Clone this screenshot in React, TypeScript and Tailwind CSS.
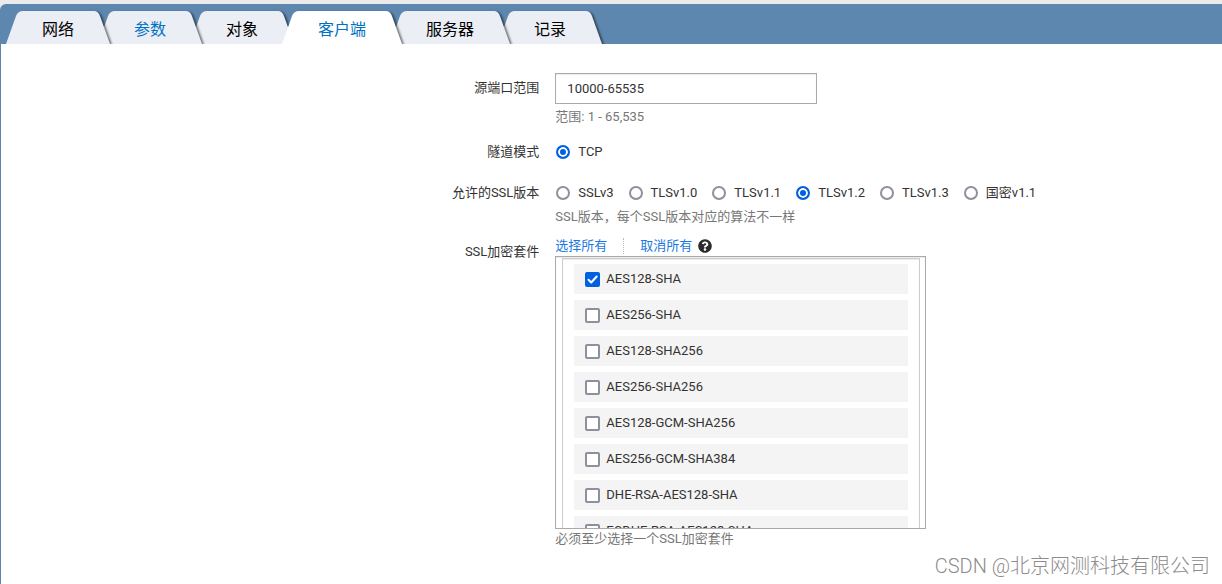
import { useState, type ReactNode } from 'react'
import { FaQuestionCircle } from 'react-icons/fa'

const tabs: Array<{ label: string; layer: string; visited?: boolean }> = [
  { label: '网络', layer: 'z-[6]' },
  { label: '参数', layer: 'z-[5]', visited: true },
  { label: '对象', layer: 'z-[4]' },
  { label: '客户端', layer: 'z-[3]', visited: true },
  { label: '服务器', layer: 'z-[2]' },
  { label: '记录', layer: 'z-[1]' },
]

const sslVersions = ['SSLv3', 'TLSv1.0', 'TLSv1.1', 'TLSv1.2', 'TLSv1.3', '国密v1.1']

const cipherSuites = [
  'AES128-SHA',
  'AES256-SHA',
  'AES128-SHA256',
  'AES256-SHA256',
  'AES128-GCM-SHA256',
  'AES256-GCM-SHA384',
  'DHE-RSA-AES128-SHA',
  'ECDHE-RSA-AES128-SHA',
]

function TabShape({ active }: { active: boolean }) {
  const fill = active ? 'fill-white' : 'fill-[#ebeef4]'

  return (
    <span className="absolute inset-0 -z-10 flex drop-shadow-[2px_1px_1px_rgba(0,0,0,0.55)]">
      <svg viewBox="0 0 24 33" className={`h-full w-6 ${fill}`} aria-hidden="true">
        <path d="M0 33 L10 5 Q12 0 17 0 H24 V33 Z" />
      </svg>
      <span className={`flex-1 ${active ? 'bg-white' : 'bg-[#ebeef4]'}`} />
      <svg viewBox="0 0 24 33" className={`h-full w-6 ${fill}`} aria-hidden="true">
        <path d="M0 0 H8 Q12 0 14 5 L24 33 H0 Z" />
      </svg>
    </span>
  )
}

function TabBar({ current, onSelect }: { current: string; onSelect: (label: string) => void }) {
  return (
    <nav className="flex overflow-hidden rounded-tl-md bg-[#5d87af] pt-[7px] pl-[18px]">
      {tabs.map((tab) => {
        const active = tab.label === current

        return (
          <button
            key={tab.label}
            type="button"
            onClick={() => onSelect(tab.label)}
            className={`relative isolate -ml-3 h-[33px] px-9 pt-1 text-base leading-7 whitespace-nowrap ${
              active ? 'z-10' : tab.layer
            } ${active || tab.visited ? 'text-[#0072c6]' : 'text-black'}`}
          >
            <TabShape active={active} />
            {tab.label}
          </button>
        )
      })}
    </nav>
  )
}

function Row({ label, htmlFor, className = '', children }: { label: string; htmlFor?: string; className?: string; children: ReactNode }) {
  return (
    <div className="flex">
      <label htmlFor={htmlFor} className={`w-[45.4%] shrink-0 pr-4 text-right leading-5 ${className}`}>
        {label}
      </label>
      <div className="min-w-0 flex-1">{children}</div>
    </div>
  )
}

function Radio({ name, label, checked, onChange }: { name: string; label: string; checked: boolean; onChange: () => void }) {
  return (
    <label className="flex items-center gap-2 leading-5 whitespace-nowrap">
      <input
        type="radio"
        name={name}
        checked={checked}
        onChange={onChange}
        className="size-[14px] appearance-none rounded-full border-2 border-[#8f8f9d] bg-white checked:border-[#0061e0] checked:bg-[#0061e0] checked:shadow-[inset_0_0_0_2px_white]"
      />
      {label}
    </label>
  )
}

function CipherItem({ label, checked, onChange }: { label: string; checked: boolean; onChange: () => void }) {
  return (
    <li className="bg-[#f4f4f4]">
      <label className="flex h-[30px] items-center gap-[6px] pl-[11px]">
        <span className="grid">
          <input
            type="checkbox"
            checked={checked}
            onChange={onChange}
            className="col-start-1 row-start-1 size-[15px] appearance-none rounded-xs border-2 border-[#8f8f9d] bg-white checked:border-[#0061e0] checked:bg-[#0061e0]"
          />
          {checked ? (
            <svg viewBox="0 0 15 15" className="pointer-events-none col-start-1 row-start-1 size-[15px]" aria-hidden="true">
              <path d="M3.5 7.8 L6.2 10.5 L11.7 4.5" fill="none" stroke="white" strokeWidth="2" strokeLinecap="round" strokeLinejoin="round" />
            </svg>
          ) : null}
        </span>
        {label}
      </label>
    </li>
  )
}

export default function App() {
  const [tab, setTab] = useState('客户端')
  const [ports, setPorts] = useState('10000-65535')
  const [version, setVersion] = useState('TLSv1.2')
  const [ciphers, setCiphers] = useState<string[]>(['AES128-SHA'])

  const toggleCipher = (name: string) =>
    setCiphers((list) => (list.includes(name) ? list.filter((item) => item !== name) : [...list, name]))

  return (
    <div className="relative flex min-h-screen flex-col bg-[#ebebeb] pt-1 font-[Roboto,'Noto_Sans_CJK_SC',sans-serif] text-[13px] text-[#333]">
      <TabBar current={tab} onSelect={setTab} />

      <main className="flex-1 border-l border-[#5d87af] bg-white pt-[29px]">
        <Row label="源端口范围" htmlFor="ports" className="pt-[5px]">
          <input
            id="ports"
            type="text"
            value={ports}
            onChange={(e) => setPorts(e.target.value)}
            className="block h-[31px] w-[262px] border border-[#aaa] bg-white px-[11px] shadow-[inset_0_1px_1px_rgba(0,0,0,0.08)] outline-none"
          />
          <p className="pt-[3px] leading-5 text-[#777]">范围: 1 - 65,535</p>
        </Row>

        <div className="pt-[15px]">
          <Row label="隧道模式">
            <div className="flex pl-px">
              <Radio name="tunnel" label="TCP" checked onChange={() => {}} />
            </div>
          </Row>
        </div>

        <div className="pt-[21px]">
          <Row label="允许的SSL版本">
            <div className="flex flex-wrap gap-x-[15px] pl-px">
              {sslVersions.map((item) => (
                <Radio key={item} name="ssl-version" label={item} checked={item === version} onChange={() => setVersion(item)} />
              ))}
            </div>
            <p className="pt-1 leading-5 text-[#777]">SSL版本，每个SSL版本对应的算法不一样</p>
          </Row>
        </div>

        <div className="pt-[9px]">
          <Row label="SSL加密套件" className="pt-[6px]">
            <div className="flex h-5 items-center leading-5">
              <button type="button" className="text-[#1a79e0]" onClick={() => setCiphers(cipherSuites)}>
                选择所有
              </button>
              <span className="mx-4 h-4 border-l border-dotted border-[#bbb]" />
              <button type="button" className="text-[#1a79e0]" onClick={() => setCiphers([])}>
                取消所有
              </button>
              <FaQuestionCircle className="ml-[6px] size-[14px] text-[#2b2b2b]" />
            </div>
            <div className="h-[273px] w-[371px] max-w-full overflow-hidden border border-[#aaa] pt-px pr-[5px] pl-[6px] shadow-[inset_0_1px_1px_rgba(0,0,0,0.08)]">
              <ul className="flex flex-col gap-[6px] border border-[#ccc] px-[11px] py-[5px] shadow-[inset_0_1px_1px_rgba(0,0,0,0.08)]">
                {cipherSuites.map((name) => (
                  <CipherItem key={name} label={name} checked={ciphers.includes(name)} onChange={() => toggleCipher(name)} />
                ))}
              </ul>
            </div>
            <p className="leading-5 text-[#777]">必须至少选择一个SSL加密套件</p>
          </Row>
        </div>
      </main>

      <p className="absolute right-3 bottom-1 text-xl font-light text-[#8c8c8c]">CSDN @北京网测科技有限公司</p>
    </div>
  )
}
